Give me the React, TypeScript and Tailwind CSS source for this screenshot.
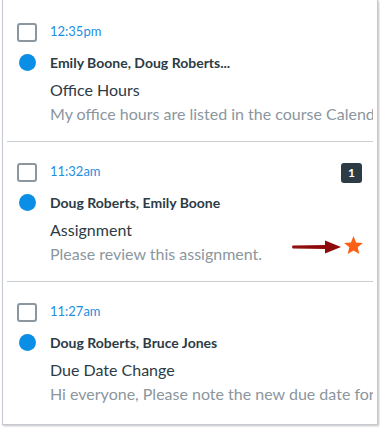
import React from "react";

type Item = { time: string; names: string; subject: string; preview: string; badge?: string; star?: boolean };

const items: Item[] = [
  { time: "12:35pm", names: "Emily Boone, Doug Roberts...", subject: "Office Hours", preview: "My office hours are listed in the course Calendar for this week." },
  { time: "11:32am", names: "Doug Roberts, Emily Boone", subject: "Assignment", preview: "Please review this assignment.", badge: "1", star: true },
  { time: "11:27am", names: "Doug Roberts, Bruce Jones", subject: "Due Date Change", preview: "Hi everyone, Please note the new due date for the assignment." },
];

function Row({ item }: { item: Item }) {
  return (
    <div className="relative pt-[20px] pb-[15px] pl-[14px] pr-[4px]">
      <div className="flex h-[20px] items-center">
        <div className="h-[19px] w-[20px] shrink-0 rounded-[3px] border-2 border-[#8b969e] bg-white" />
        <span className="ml-[13px] text-[13px] text-[#1f8fe0]">{item.time}</span>
        {item.badge && (
          <span className="ml-auto mr-[11px] mt-[2px] flex h-[20px] w-[21px] items-center justify-center rounded-[3px] bg-[#2d3b45] text-[12px] font-bold text-white">
            {item.badge}
          </span>
        )}
      </div>
      <div className="mt-[10px] flex h-[20px] items-center">
        <div className="ml-[2px] h-[17px] w-[17px] shrink-0 rounded-full bg-[#0b8ee6]" />
        <span className="ml-[14px] text-[14px] font-bold text-[#2d3b45]">{item.names}</span>
      </div>
      <div className="mt-[6px] h-[24px] overflow-hidden whitespace-nowrap pl-[33px] text-[16px] leading-[24px] text-[#2d3b45]">
        {item.subject}
      </div>
      <div className="h-[24px] overflow-hidden whitespace-nowrap pl-[33px] text-[16px] leading-[24px] text-[#8b969e]">
        {item.preview}
      </div>
      {item.star && (
        <div className="absolute left-[286px] top-[94px] flex items-center">
          <svg width="54" height="22" viewBox="0 0 54 22">
            <path d="M4 10.2 L38 9.8 L38 12.2 L4 11.8 Z" fill="#8e0b0b" stroke="#8e0b0b" strokeWidth="1.6" strokeLinejoin="round" />
            <path d="M36 4.5 L52 11 L36 17.5 Z" fill="#8e0b0b" />
          </svg>
          <svg width="21" height="21" viewBox="0 0 24 24" className="-mt-[3px]">
            <polygon points="12,1.2 14.9,8.5 22.7,9.1 16.8,14.1 18.6,21.8 12,17.7 5.4,21.8 7.2,14.1 1.3,9.1 9.1,8.5" fill="#fc5e13" />
          </svg>
        </div>
      )}
    </div>
  );
}

export default function App() {
  return (
    <div className="h-[428px] w-[380px] overflow-hidden bg-white" style={{ fontFamily: "Lato, 'Noto Sans', sans-serif" }}>
      <div className="ml-[2px] h-[425px] w-[376px] border-x border-b border-[#c4cacf] bg-white pt-[2px] shadow-[1px_1px_2px_rgba(0,0,0,0.25)]">
        {items.map((it, i) => (
          <div key={i}>
            {i > 0 && <div className="mx-[4px] h-[1px] bg-[#c7cdd1]" />}
            <Row item={it} />
          </div>
        ))}
      </div>
    </div>
  );
}
